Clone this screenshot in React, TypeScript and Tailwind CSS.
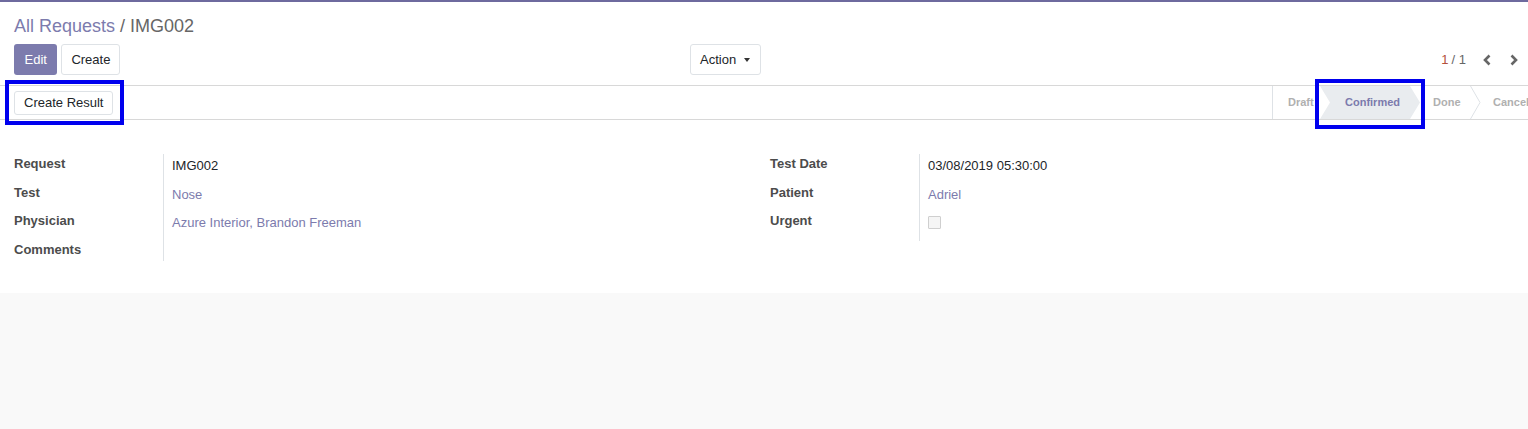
import React from "react";

const F = { fontFamily: '"Liberation Sans", Arial, sans-serif' };

function Chevron({ dir }: { dir: "left" | "right" }) {
  return (
    <svg width="10" height="12" viewBox="0 0 10 12" className="block">
      {dir === "left" ? (
        <path d="M7.5 1.5 L3 6 L7.5 10.5" fill="none" stroke="#666" strokeWidth="2.6" />
      ) : (
        <path d="M2.5 1.5 L7 6 L2.5 10.5" fill="none" stroke="#666" strokeWidth="2.6" />
      )}
    </svg>
  );
}

function Sep() {
  return (
    <svg width="11" height="33" viewBox="0 0 11 33" className="block shrink-0">
      <path d="M0.5 0 L10 16.5 L0.5 33" fill="none" stroke="#dee2e6" strokeWidth="1" />
    </svg>
  );
}

function Row({ label, children, h = "h-[28.67px]" }: { label: string; children?: React.ReactNode; h?: string }) {
  return (
    <div className={`grid grid-cols-[149px_1fr] ${h}`}>
      <div className="font-bold text-[13px] leading-[20px] text-[#4c4c4c]">{label}</div>
      <div className="border-l border-[#dee2e6] pl-[8px] pt-[2px] text-[13px] leading-[20px] text-[#212529]">{children}</div>
    </div>
  );
}

export default function App() {
  return (
    <div style={F} className="min-h-[429px] h-screen bg-[#f9f9f9] flex flex-col relative overflow-hidden">
      <div className="bg-white">
        <div className="h-[2px] bg-[#6e6a9e]" />
        {/* control panel */}
        <div className="border-b border-[#d8d8d8] px-[14px] pt-[10px] pb-[10px]">
          <div className="text-[18px] leading-[28px]">
            <span className="text-[#7c7bad]">All Requests</span>
            <span className="text-[#666666]"> / IMG002</span>
          </div>
          <div className="flex items-center mt-[4px]">
            <div className="flex gap-[4px] w-[676px]">
              <button className="h-[31px] px-[10.5px] rounded-[3px] bg-[#7c7bad] text-white text-[13px]">Edit</button>
              <button className="h-[31px] px-[9px] rounded-[3px] border border-[#dee2e6] bg-white text-[#212529] text-[13px]">Create</button>
            </div>
            <button className="h-[31px] w-[71px] pl-[9px] rounded-[3px] border border-[#dee2e6] bg-white text-[#212529] text-[13px] flex items-center gap-[8px]">
              Action
              <span className="w-0 h-0 border-l-[3.5px] border-r-[3.5px] border-t-[4px] border-l-transparent border-r-transparent border-t-[#333]" />
            </button>
            <div className="flex-1" />
            <div className="flex items-center text-[13px] text-[#666666] mr-[-5px]">
              <span className="text-[#b4503c]">1</span>
              <span className="ml-[3px]">/ 1</span>
              <span className="ml-[16px]"><Chevron dir="left" /></span>
              <span className="ml-[17px]"><Chevron dir="right" /></span>
            </div>
          </div>
        </div>
        {/* statusbar */}
        <div className="h-[34px] border-b border-[#d8d8d8] flex items-center pl-[14px]">
          <button className="h-[24px] px-[9px] rounded-[3px] border border-[#dee2e6] bg-white text-[#212529] text-[13px]">Create Result</button>
          <div className="flex-1" />
          <div className="flex h-full w-[256px] shrink-0 overflow-hidden items-center text-[11px] font-bold text-[#b0b0b0] whitespace-nowrap">
            <div className="h-full shrink-0 border-l border-[#dee2e6] pl-[15px] w-[48px] flex items-center">Draft</div>
            <div
              className="h-full shrink-0 w-[100px] bg-[#e9ecef] text-[#7c7bad] flex items-center pl-[25px]"
              style={{ clipPath: "polygon(0 0, 90px 0, 100px 50%, 90px 100%, 0 100%, 10px 50%)" }}
            >
              Confirmed
            </div>
            <div className="h-full shrink-0 w-[50px] pl-[13px] flex items-center">Done</div>
            <Sep />
            <div className="h-full shrink-0 pl-[12px] pr-[20px] flex items-center">Cancel</div>
          </div>
        </div>
        {/* sheet */}
        <div className="grid grid-cols-[756px_1fr] px-[14px] pt-[34px] pb-[32px]">
          <div>
            <Row label="Request">IMG002</Row>
            <Row label="Test"><span className="text-[#7c7bad]">Nose</span></Row>
            <Row label="Physician"><span className="text-[#7c7bad]">Azure Interior, Brandon Freeman</span></Row>
            <Row label="Comments" h="h-[21px]" />
          </div>
          <div>
            <Row label="Test Date">03/08/2019 05:30:00</Row>
            <Row label="Patient"><span className="text-[#7c7bad]">Adriel</span></Row>
            <Row label="Urgent" h="h-[30px]">
              <div className="mt-[3px] w-[13px] h-[13px] border border-[#cfcfcf] bg-[#f5f5f5] rounded-[1px]" />
            </Row>
          </div>
        </div>
      </div>
      {/* annotation boxes */}
      <div className="absolute left-[5px] top-[80px] w-[119px] h-[45px] border-[4px] border-[#0000ee]" />
      <div className="absolute left-[1315px] top-[79px] w-[110px] h-[50px] border-[4px] border-[#0000ee]" />
    </div>
  );
}
